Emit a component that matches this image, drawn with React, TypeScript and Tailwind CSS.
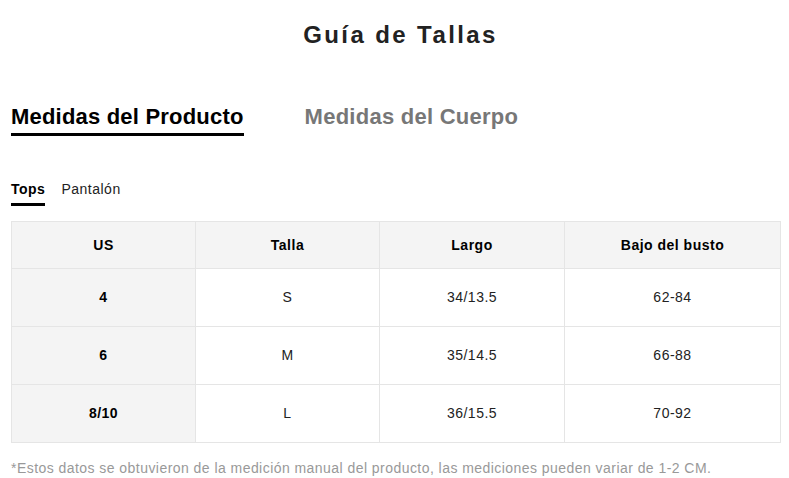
const rows = [
  { us: '4', talla: 'S', largo: '34/13.5', busto: '62-84' },
  { us: '6', talla: 'M', largo: '35/14.5', busto: '66-88' },
  { us: '8/10', talla: 'L', largo: '36/15.5', busto: '70-92' },
];

export default function App() {
  return (
    <div className="min-h-[478px] w-[789px] bg-white px-[11px] font-['Liberation_Sans',Arial,sans-serif] text-black">
      <h1 className="pl-[12px] pt-[21px] text-center text-[24px] font-bold leading-[28px] tracking-[2.4px] text-[#222]">
        Guía de Tallas
      </h1>

      {/* pestañas principales */}
      <div className="mt-[55px] flex gap-[61px]">
        <button className="border-b-[3px] border-black pb-[3px] text-[22px] font-bold leading-[26px] tracking-[0.2px] text-black">
          Medidas del Producto
        </button>
        <button className="border-b-[3px] border-transparent pb-[3px] text-[22px] font-bold leading-[26px] tracking-[0.25px] text-[#777]">
          Medidas del Cuerpo
        </button>
      </div>

      {/* sub pestañas */}
      <div className="mt-[43px] flex gap-[16px] tracking-[0.5px]">
        <button className="border-b-[3px] border-black pb-[4px] text-[14px] font-bold leading-[20px]">
          Tops
        </button>
        <button className="border-b-[3px] border-transparent pb-[4px] text-[14px] leading-[20px] text-[#222]">
          Pantalón
        </button>
      </div>

      <table className="mt-[15px] w-[770px] table-fixed border-collapse text-center text-[14px] tracking-[0.5px]">
        <colgroup>
          <col className="w-[184px]" />
          <col className="w-[184px]" />
          <col className="w-[185px]" />
          <col />
        </colgroup>
        <thead>
          <tr className="h-[47px] bg-[#f4f4f4]">
            <th className="border border-[#e5e5e5] font-bold">US</th>
            <th className="border border-[#e5e5e5] font-bold">Talla</th>
            <th className="border border-[#e5e5e5] font-bold">Largo</th>
            <th className="border border-[#e5e5e5] font-bold">Bajo del busto</th>
          </tr>
        </thead>
        <tbody>
          {rows.map((r) => (
            <tr key={r.us} className="h-[58px]">
              <td className="border border-[#e5e5e5] bg-[#f4f4f4] font-bold">{r.us}</td>
              <td className="border border-[#e5e5e5] text-[#222]">{r.talla}</td>
              <td className="border border-[#e5e5e5] text-[#222]">{r.largo}</td>
              <td className="border border-[#e5e5e5] text-[#222]">{r.busto}</td>
            </tr>
          ))}
        </tbody>
      </table>

      <p className="mt-[15px] text-[14px] leading-[20px] tracking-[0.45px] text-[#999]">
        *Estos datos se obtuvieron de la medición manual del producto, las mediciones pueden variar de 1-2 CM.
      </p>
    </div>
  );
}
